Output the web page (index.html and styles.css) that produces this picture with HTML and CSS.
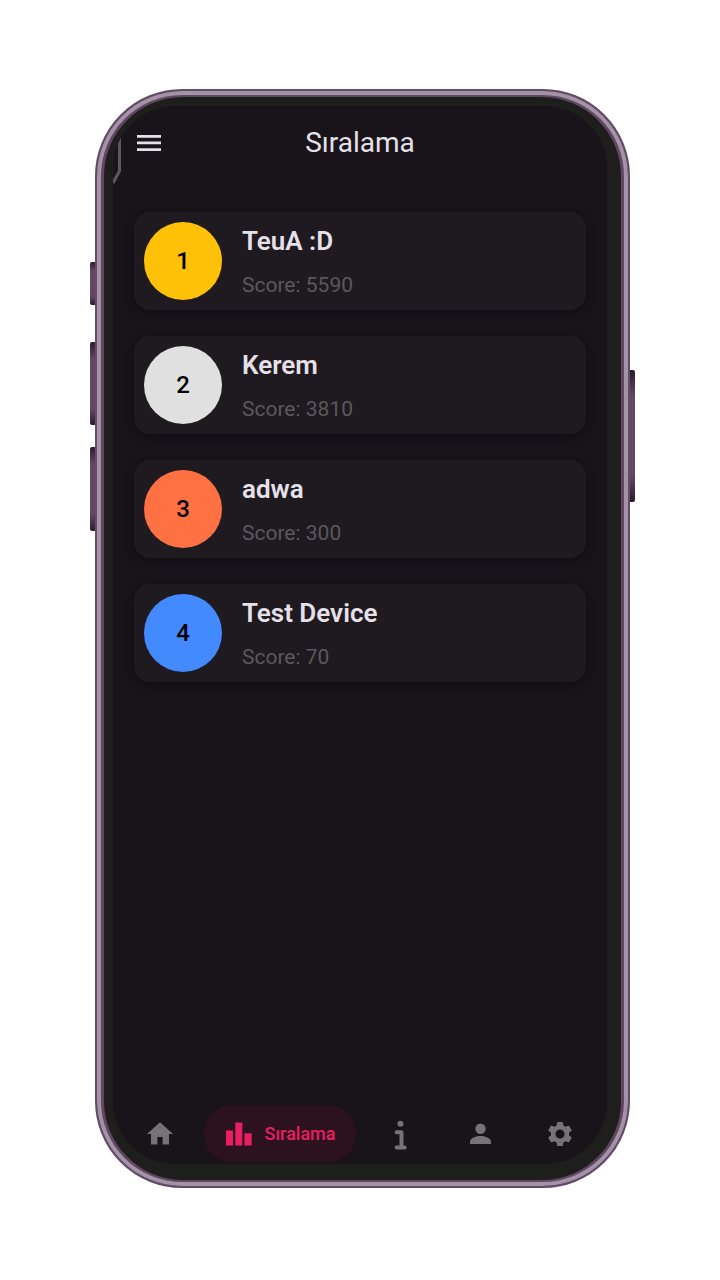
FILE: index.html
```html
<!DOCTYPE html>
<html lang="tr">
<head>
<meta charset="utf-8">
<meta name="viewport" content="width=device-width, initial-scale=1">
<title>Sıralama</title>
<link rel="stylesheet" href="styles.css">
</head>
<body>
<div class="phone">
  <span class="side-key key-mute"></span>
  <span class="side-key key-up"></span>
  <span class="side-key key-down"></span>
  <span class="side-key key-power"></span>
  <div class="bezel">
    <div class="screen">
      <svg class="edge-mark" viewBox="0 0 10 50" aria-hidden="true"><path d="M6.500 0V34L0 46" fill="none" stroke="#5c595e" stroke-width="3"/></svg>
      <header class="topbar">
        <button class="menu" type="button" aria-label="Menu">
          <svg viewBox="0 0 24 16" aria-hidden="true"><path d="M0 0h24v2.700H0zM0 6.600h24v2.700H0zM0 13.300h24V16H0z"/></svg>
        </button>
        <h1 class="title">Sıralama</h1>
      </header>
      <main>
        <ol class="ranking">
          <li class="card"><span class="rank gold">1</span><div class="player"><h2 class="name">TeuA :D</h2><p class="score">Score: 5590</p></div></li>
          <li class="card"><span class="rank silver">2</span><div class="player"><h2 class="name">Kerem</h2><p class="score">Score: 3810</p></div></li>
          <li class="card"><span class="rank bronze">3</span><div class="player"><h2 class="name">adwa</h2><p class="score">Score: 300</p></div></li>
          <li class="card"><span class="rank blue">4</span><div class="player"><h2 class="name">Test Device</h2><p class="score">Score: 70</p></div></li>
        </ol>
      </main>
      <nav class="tabs">
        <button class="tab" type="button" aria-label="Home">
          <svg class="icon" viewBox="0 0 30 30" aria-hidden="true"><path d="M12.400 25.500V18h5.200V25.500h6.400V15h4L15 3.200 2 15h4V25.500z"/></svg>
        </button>
        <button class="tab active" type="button">
          <svg class="icon" viewBox="0 0 30 30" aria-hidden="true"><path d="M2 11.500h7V26.500H2zM11.300 3.500h7V26.500h-7zM20.500 14.200h7.200V26.500h-7.200z"/></svg>
          <span>Sıralama</span>
        </button>
        <button class="tab" type="button" aria-label="Info">
          <svg class="icon" viewBox="0 0 30 30" aria-hidden="true"><circle cx="15.500" cy="4.700" r="3"/><path d="M11.600 13.200h4.900v15.400M11.600 28.600h8" fill="none" stroke="currentColor" stroke-width="4" stroke-linecap="round" stroke-linejoin="round"/></svg>
        </button>
        <button class="tab" type="button" aria-label="Profile">
          <svg class="icon" viewBox="0 0 30 30" aria-hidden="true"><circle cx="15.500" cy="9.800" r="5.200"/><path d="M5 25v-2.300c0-3.800 6.500-5.700 10.500-5.700S26 18.900 26 22.700v2.300z"/></svg>
        </button>
        <button class="tab" type="button" aria-label="Settings">
          <svg class="icon" viewBox="0 0 24 24" aria-hidden="true"><path d="M19.140 12.940c.04-.3.060-.61.060-.94s-.02-.64-.07-.94l2.030-1.580c.18-.14.230-.41.120-.61l-1.920-3.320c-.12-.22-.37-.29-.59-.22l-2.390.96c-.5-.38-1.030-.7-1.620-.94l-.36-2.540c-.04-.24-.24-.41-.48-.41h-3.840c-.24 0-.43.17-.47.41l-.36 2.540c-.59.24-1.130.57-1.620.94l-2.390-.96c-.22-.08-.47 0-.59.22L2.740 8.870c-.12.21-.08.470.12.610l2.030 1.580c-.05.3-.09.630-.09.940s.02.640.07.940l-2.030 1.580c-.18.14-.23.410-.12.610l1.920 3.320c.12.220.37.290.59.220l2.390-.96c.5.380 1.030.7 1.620.940l.36 2.540c.05.240.24.410.48.410h3.840c.24 0 .44-.17.470-.41l.36-2.540c.59-.24 1.130-.56 1.620-.94l2.390.96c.22.080.47 0 .59-.22l1.920-3.320c.12-.22.070-.47-.12-.61zM12 15.600A3.600 3.600 0 1 1 12 8.400a3.600 3.600 0 0 1 0 7.200z"/></svg>
        </button>
      </nav>
    </div>
  </div>
</div>
</body>
</html>
```
FILE: styles.css
```css
* {
  box-sizing: border-box;
}

body {
  margin: 0;
  min-height: 100vh;
  padding: 89px 90px 92px 95px;
  display: flex;
  background: #fff;
  color: #e6e0e9;
  font-family: Roboto, "Noto Sans", sans-serif;
}

.phone {
  position: relative;
  flex: 1;
  display: flex;
  padding: 6px 7px;
  border: 2px solid #644c66;
  border-radius: 87px;
  background: #604660;
  box-shadow: inset 0 0 0 4px #a293a6;
}

/* Hardware keys on the outside of the frame */
.side-key {
  position: absolute;
  left: -7px;
  width: 5px;
  border-radius: 2px 0 0 2px;
  background: linear-gradient(#2c1c2e, #644763 20%, #644763 80%, #2c1c2e);
}

.key-mute {
  top: 171px;
  height: 43px;
}

.key-up {
  top: 251px;
  height: 83px;
}

.key-down {
  top: 356px;
  height: 84px;
}

.key-power {
  top: 279px;
  right: -7px;
  left: auto;
  height: 132px;
  border-radius: 0 2px 2px 0;
}

.bezel {
  flex: 1;
  display: flex;
  padding: 9px 14px 16px 9px;
  border-radius: 79px;
  background: #1e1f1c;
}

.screen {
  position: relative;
  flex: 1;
  display: flex;
  flex-direction: column;
  overflow: hidden;
  border-radius: 62px;
  background: #18141a;
}

.edge-mark {
  position: absolute;
  top: 31px;
  left: 0;
  width: 10px;
  height: 50px;
}

.topbar {
  display: grid;
  grid-template-columns: 48px 1fr 48px;
  align-items: center;
  height: 74px;
  padding: 0 12px;
}

.menu {
  display: flex;
  padding: 12px;
  border: 0;
  background: none;
}

.menu svg {
  width: 24px;
  height: 16px;
  fill: #e6e0e9;
}

.title {
  margin: 0;
  font-size: 28px;
  font-weight: 400;
  line-height: 36px;
  text-align: center;
}

main {
  flex: 1;
  padding: 32px 21px;
}

.ranking {
  display: grid;
  gap: 26px;
  margin: 0;
  padding: 0;
  list-style: none;
}

.card {
  display: flex;
  align-items: center;
  gap: 20px;
  padding: 10px;
  border-radius: 16px;
  background: #1e1a1f;
  box-shadow: 0 3px 8px #110d13;
}

.rank {
  display: grid;
  place-items: center;
  width: 78px;
  height: 78px;
  border-radius: 50%;
  color: #000;
  font-size: 24px;
  font-weight: 500;
}

.gold {
  background: #ffc107;
}

.silver {
  background: #e0e0e0;
}

.bronze {
  background: #ff7043;
}

.blue {
  background: #448aff;
}

.player {
  display: grid;
  gap: 12px;
}

.name {
  margin: 0;
  font-size: 26px;
  font-weight: 600;
  line-height: 36px;
}

.score {
  margin: 0;
  color: #5b585c;
  font-size: 21px;
  line-height: 28px;
}

.tabs {
  display: flex;
  padding: 0 7px 2px;
}

.tab {
  flex: 0 0 80px;
  display: flex;
  align-items: center;
  justify-content: center;
  height: 57px;
  padding: 0;
  border: 0;
  border-radius: 29px;
  background: none;
  color: #757377;
  font: 500 18px Roboto, "Noto Sans", sans-serif;
}

.active {
  flex: 1;
  gap: 10px;
  margin: 0 4px;
  background: #2c121f;
  color: #e91e63;
}

.icon {
  width: 30px;
  height: 30px;
  overflow: visible;
  fill: currentColor;
}
```
